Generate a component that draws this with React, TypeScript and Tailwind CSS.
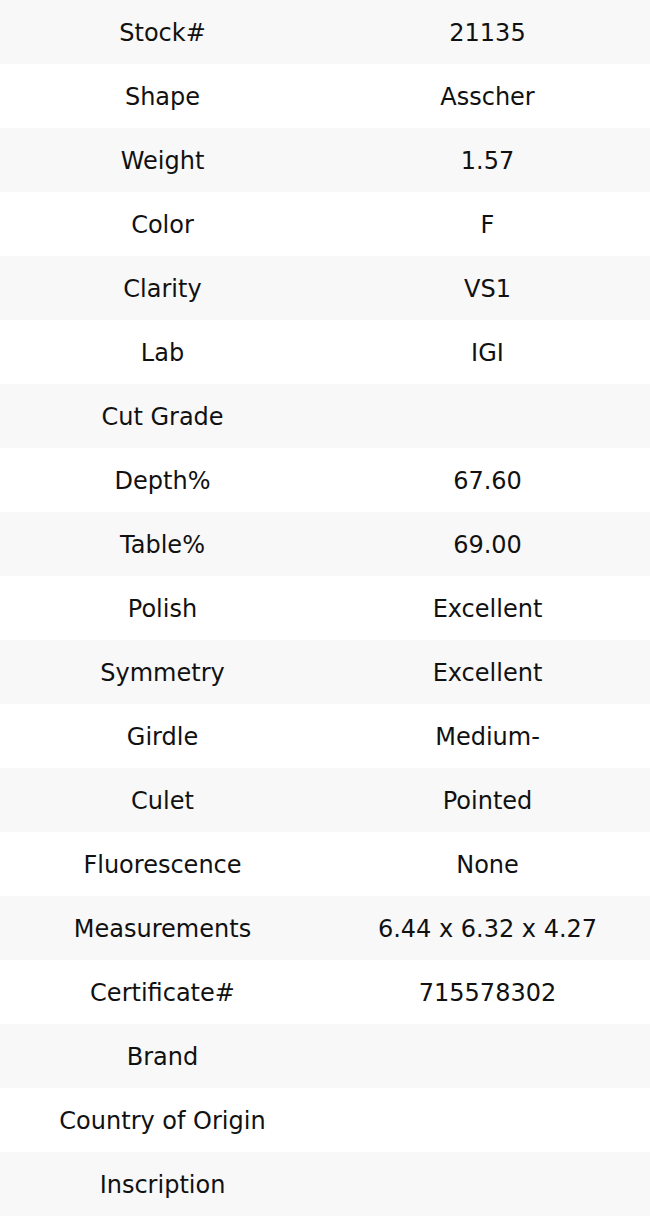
const rows: [string, string][] = [
  ["Stock#", "21135"],
  ["Shape", "Asscher"],
  ["Weight", "1.57"],
  ["Color", "F"],
  ["Clarity", "VS1"],
  ["Lab", "IGI"],
  ["Cut Grade", ""],
  ["Depth%", "67.60"],
  ["Table%", "69.00"],
  ["Polish", "Excellent"],
  ["Symmetry", "Excellent"],
  ["Girdle", "Medium-"],
  ["Culet", "Pointed"],
  ["Fluorescence", "None"],
  ["Measurements", "6.44 x 6.32 x 4.27"],
  ["Certificate#", "715578302"],
  ["Brand", ""],
  ["Country of Origin", ""],
  ["Inscription", ""],
];

export default function App() {
  return (
    <div className="w-[650px] bg-white text-[24px] text-[#111] font-['DejaVu_Sans',sans-serif]">
      {rows.map(([label, value], i) => (
        <div
          key={label}
          className={`grid grid-cols-2 h-16 pt-[2px] items-center text-center ${
            i % 2 === 0 ? "bg-[#f8f8f8]" : "bg-white"
          }`}
        >
          <div>{label}</div>
          <div>{value}</div>
        </div>
      ))}
    </div>
  );
}
